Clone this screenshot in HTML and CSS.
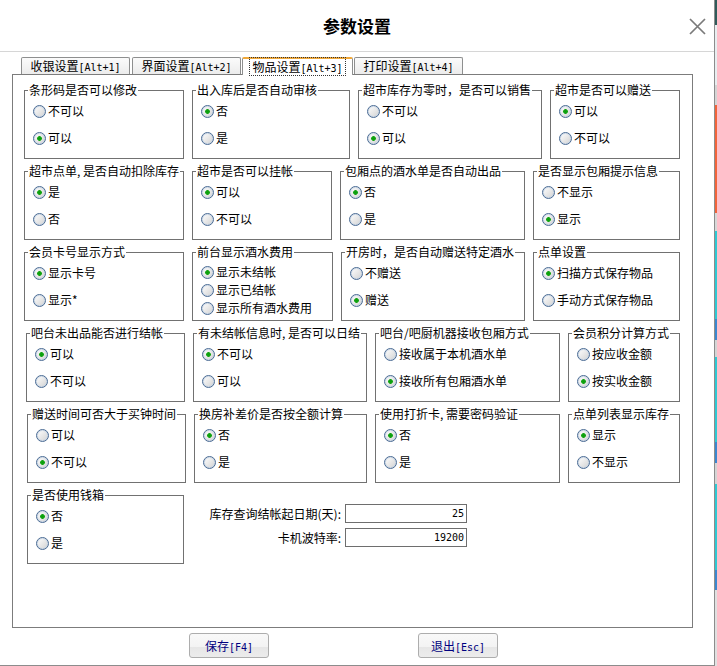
FILE: index.html
```html
<!DOCTYPE html>
<html lang="zh-CN">
<head>
<meta charset="utf-8">
<title>参数设置</title>
<link rel="stylesheet" href="styles.css">
</head>
<body>
<div class="screen">
  <div class="dialog">
    <header class="titlebar">
      <span></span>
      <h1 class="title">参数设置</h1>
      <button class="close" type="button" aria-label="关闭">
        <svg width="17" height="17" viewBox="0 0 17 17"><path d="M1 1L16 16M16 1L1 16" stroke="#7a7a7a" stroke-width="1.7" fill="none"/></svg>
      </button>
    </header>
    <main class="content">
      <nav class="tabs">
        <div class="tab">收银设置<span class="key">[Alt+1]</span></div>
        <div class="tab">界面设置<span class="key">[Alt+2]</span></div>
        <div class="tab active"><span class="lbl">物品设置<span class="key">[Alt+3]</span></span></div>
        <div class="tab">打印设置<span class="key">[Alt+4]</span></div>
      </nav>
      <section class="panel">
        <div class="row r1">
          <fieldset class="grp"><legend>条形码是否可以修改</legend><div class="opts">
            <label class="opt"><input class="rb" type="radio" name="g11"><span>不可以</span></label>
            <label class="opt"><input class="rb" type="radio" name="g11" checked><span>可以</span></label>
          </div></fieldset>
          <fieldset class="grp"><legend>出入库后是否自动审核</legend><div class="opts">
            <label class="opt"><input class="rb" type="radio" name="g12" checked><span>否</span></label>
            <label class="opt"><input class="rb" type="radio" name="g12"><span>是</span></label>
          </div></fieldset>
          <fieldset class="grp"><legend>超市库存为零时，是否可以销售</legend><div class="opts">
            <label class="opt"><input class="rb" type="radio" name="g13"><span>不可以</span></label>
            <label class="opt"><input class="rb" type="radio" name="g13" checked><span>可以</span></label>
          </div></fieldset>
          <fieldset class="grp"><legend>超市是否可以赠送</legend><div class="opts">
            <label class="opt"><input class="rb" type="radio" name="g14" checked><span>可以</span></label>
            <label class="opt"><input class="rb" type="radio" name="g14"><span>不可以</span></label>
          </div></fieldset>
        </div>
        <div class="row r2">
          <fieldset class="grp"><legend>超市点单, 是否自动扣除库存</legend><div class="opts">
            <label class="opt"><input class="rb" type="radio" name="g21" checked><span>是</span></label>
            <label class="opt"><input class="rb" type="radio" name="g21"><span>否</span></label>
          </div></fieldset>
          <fieldset class="grp"><legend>超市是否可以挂帐</legend><div class="opts">
            <label class="opt"><input class="rb" type="radio" name="g22" checked><span>可以</span></label>
            <label class="opt"><input class="rb" type="radio" name="g22"><span>不可以</span></label>
          </div></fieldset>
          <fieldset class="grp"><legend>包厢点的酒水单是否自动出品</legend><div class="opts">
            <label class="opt"><input class="rb" type="radio" name="g23" checked><span>否</span></label>
            <label class="opt"><input class="rb" type="radio" name="g23"><span>是</span></label>
          </div></fieldset>
          <fieldset class="grp"><legend>是否显示包厢提示信息</legend><div class="opts">
            <label class="opt"><input class="rb" type="radio" name="g24"><span>不显示</span></label>
            <label class="opt"><input class="rb" type="radio" name="g24" checked><span>显示</span></label>
          </div></fieldset>
        </div>
        <div class="row r3">
          <fieldset class="grp"><legend>会员卡号显示方式</legend><div class="opts">
            <label class="opt"><input class="rb" type="radio" name="g31" checked><span>显示卡号</span></label>
            <label class="opt"><input class="rb" type="radio" name="g31"><span>显示*</span></label>
          </div></fieldset>
          <fieldset class="grp"><legend>前台显示酒水费用</legend><div class="opts three">
            <label class="opt"><input class="rb" type="radio" name="g32" checked><span>显示未结帐</span></label>
            <label class="opt"><input class="rb" type="radio" name="g32"><span>显示已结帐</span></label>
            <label class="opt"><input class="rb" type="radio" name="g32"><span>显示所有酒水费用</span></label>
          </div></fieldset>
          <fieldset class="grp"><legend>开房时，是否自动赠送特定酒水</legend><div class="opts">
            <label class="opt"><input class="rb" type="radio" name="g33"><span>不赠送</span></label>
            <label class="opt"><input class="rb" type="radio" name="g33" checked><span>赠送</span></label>
          </div></fieldset>
          <fieldset class="grp"><legend>点单设置</legend><div class="opts">
            <label class="opt"><input class="rb" type="radio" name="g34" checked><span>扫描方式保存物品</span></label>
            <label class="opt"><input class="rb" type="radio" name="g34"><span>手动方式保存物品</span></label>
          </div></fieldset>
        </div>
        <div class="row r4">
          <fieldset class="grp"><legend>吧台未出品能否进行结帐</legend><div class="opts">
            <label class="opt"><input class="rb" type="radio" name="g41" checked><span>可以</span></label>
            <label class="opt"><input class="rb" type="radio" name="g41"><span>不可以</span></label>
          </div></fieldset>
          <fieldset class="grp"><legend>有未结帐信息时, 是否可以日结</legend><div class="opts">
            <label class="opt"><input class="rb" type="radio" name="g42" checked><span>不可以</span></label>
            <label class="opt"><input class="rb" type="radio" name="g42"><span>可以</span></label>
          </div></fieldset>
          <fieldset class="grp"><legend>吧台/吧厨机器接收包厢方式</legend><div class="opts">
            <label class="opt"><input class="rb" type="radio" name="g43"><span>接收属于本机酒水单</span></label>
            <label class="opt"><input class="rb" type="radio" name="g43" checked><span>接收所有包厢酒水单</span></label>
          </div></fieldset>
          <fieldset class="grp"><legend>会员积分计算方式</legend><div class="opts">
            <label class="opt"><input class="rb" type="radio" name="g44"><span>按应收金额</span></label>
            <label class="opt"><input class="rb" type="radio" name="g44" checked><span>按实收金额</span></label>
          </div></fieldset>
        </div>
        <div class="row r5">
          <fieldset class="grp"><legend>赠送时间可否大于买钟时间</legend><div class="opts">
            <label class="opt"><input class="rb" type="radio" name="g51"><span>可以</span></label>
            <label class="opt"><input class="rb" type="radio" name="g51" checked><span>不可以</span></label>
          </div></fieldset>
          <fieldset class="grp"><legend>换房补差价是否按全额计算</legend><div class="opts">
            <label class="opt"><input class="rb" type="radio" name="g52" checked><span>否</span></label>
            <label class="opt"><input class="rb" type="radio" name="g52"><span>是</span></label>
          </div></fieldset>
          <fieldset class="grp"><legend>使用打折卡, 需要密码验证</legend><div class="opts">
            <label class="opt"><input class="rb" type="radio" name="g53" checked><span>否</span></label>
            <label class="opt"><input class="rb" type="radio" name="g53"><span>是</span></label>
          </div></fieldset>
          <fieldset class="grp"><legend>点单列表显示库存</legend><div class="opts">
            <label class="opt"><input class="rb" type="radio" name="g54" checked><span>显示</span></label>
            <label class="opt"><input class="rb" type="radio" name="g54"><span>不显示</span></label>
          </div></fieldset>
        </div>
        <div class="row r6">
          <fieldset class="grp cash"><legend>是否使用钱箱</legend><div class="opts">
            <label class="opt"><input class="rb" type="radio" name="g61" checked><span>否</span></label>
            <label class="opt"><input class="rb" type="radio" name="g61"><span>是</span></label>
          </div></fieldset>
          <div class="extra">
            <label class="flabel" for="days">库存查询结帐起日期(天):</label>
            <input class="num" id="days" type="text" value="25">
            <label class="flabel" for="baud">卡机波特率:</label>
            <input class="num" id="baud" type="text" value="19200">
          </div>
        </div>
      </section>
      <div class="buttons">
        <button class="btn" type="button">保存<span class="key">[F4]</span></button>
        <button class="btn" type="button">退出<span class="key">[Esc]</span></button>
      </div>
    </main>
  </div>
  <div class="backdrop"></div>
</div>
</body>
</html>
```
FILE: styles.css
```css
* { box-sizing: border-box; }
html, body { margin: 0; padding: 0; }
body {
  width: 717px;
  height: 666px;
  overflow: hidden;
  background: #fff;
  color: #000;
  font-family: "Noto Sans CJK SC", "Noto Sans", sans-serif;
  font-size: 12px;
}
.screen { display: flex; height: 666px; }
.dialog {
  width: 715px;
  height: 666px;
  flex: none;
  background: #fff;
  border-right: 1px solid #8c8c8c;
  border-bottom: 1px solid #8c8c8c;
  display: flex;
  flex-direction: column;
}
.backdrop {
  flex: 1;
  background: linear-gradient(to bottom,
    #2f5b5a 0 25px, #e8eef0 25px 85px, #d5d5d5 85px 105px,
    #f2643a 105px 213px, #d8d8d8 213px 231px,
    #2ec9d3 231px 319px, #3b87cf 319px 340px, #d5d5d5 340px 357px,
    #2ec9d3 357px 442px, #3b87cf 442px 463px, #d5d5d5 463px 484px,
    #2ec9d3 484px 570px, #3b87cf 570px 590px, #e0e0e0 590px);
}
.titlebar {
  height: 52px;
  flex: none;
  border-bottom: 1px solid #d6d6d6;
  display: grid;
  grid-template-columns: 1fr auto 1fr;
  align-items: center;
}
.title {
  margin: 0;
  font-size: 17px;
  font-weight: bold;
  line-height: 20px;
}
.close {
  justify-self: end;
  margin: 2px 8px 0 0;
  padding: 0;
  border: 0;
  background: none;
  width: 17px;
  height: 17px;
  display: block;
}
.close svg { display: block; }
.content { padding: 5px 0 0 12px; }
.tabs {
  display: flex;
  gap: 2px;
  margin-left: 9px;
  height: 17px;
}
.tab {
  width: 109px;
  height: 17px;
  border: 1px solid #8e8f8f;
  border-bottom: none;
  border-radius: 2px 2px 0 0;
  background: linear-gradient(#fbfbfb, #ececec);
  text-align: center;
  line-height: 15px;
  white-space: nowrap;
}
.tab.active {
  position: relative;
  z-index: 2;
  width: 111px;
  height: 18px;
  margin: 0 -1px;
  background: #fff;
  border-top: 2px solid #f0a83a;
}
.tab.active .lbl {
  outline: 1px dotted #333;
  padding: 0 2px;
}
.key {
  font-family: "DejaVu Sans Mono", "Liberation Mono", monospace;
  font-size: 10px;
}
.panel {
  width: 681px;
  height: 554px;
  border: 1px solid #7c7c7c;
  padding: 8px 0 0 11px;
  display: flex;
  flex-direction: column;
  gap: 5px;
}
.row {
  display: grid;
  column-gap: 8px;
  height: 76px;
}
.r1 { grid-template-columns: 160px 158px 184px 130px; }
.r2 { grid-template-columns: 160px 140px 185px 147px; }
.r3 { grid-template-columns: 160px 141px 184px 147px; }
.r4 { grid-template-columns: 159px 174px 185px 112px; margin-left: 2px; }
.r5 { grid-template-columns: 159px 173px 185px 112px; margin-left: 3px; }
.r6 { display: flex; column-gap: 0; margin-left: 3px; }
.grp {
  margin: 0;
  padding: 0;
  min-width: 0;
  height: 76px;
  border: 1px solid #717171;
}
.grp.cash { width: 157px; flex: none; }
.grp legend {
  margin-left: 3px;
  padding: 0 1px;
  line-height: 14px;
  white-space: nowrap;
}
.opts {
  display: flex;
  flex-direction: column;
  gap: 13px;
  padding: 7px 0 0 8px;
}
.opts.three { gap: 4px; padding-top: 6px; }
.opt {
  display: flex;
  align-items: center;
  gap: 2px;
  height: 14px;
  line-height: 14px;
  white-space: nowrap;
}
.rb {
  -webkit-appearance: none;
  appearance: none;
  flex: none;
  width: 13px;
  height: 13px;
  margin: 0;
  border: 1px solid #4a6b94;
  border-radius: 50%;
  background: linear-gradient(135deg, #ffffff 0%, #e4e4e4 60%, #d2d2d2 100%);
  box-shadow: inset 0 0 0 1px rgba(200, 214, 230, 0.8);
}
.rb:checked {
  background:
    radial-gradient(circle, #0c9a0c 0, #13a613 2px, rgba(255,255,255,0) 2.7px),
    linear-gradient(135deg, #ffffff 0%, #e4e4e4 60%, #d2d2d2 100%);
}
.extra {
  display: grid;
  grid-template-columns: 142px 122px;
  column-gap: 4px;
  row-gap: 5px;
  align-content: start;
  margin-left: 15px;
  padding-top: 16px;
}
.flabel {
  text-align: right;
  line-height: 19px;
  white-space: nowrap;
}
.num {
  width: 122px;
  height: 19px;
  margin: 0;
  border: 1px solid #6e6e6e;
  padding: 0 2px 0 1px;
  text-align: right;
  font-family: "DejaVu Sans Mono", "Liberation Mono", monospace;
  font-size: 10px;
  color: #000;
  background: #fff;
}
.buttons {
  display: flex;
  gap: 149px;
  margin: 5px 0 0 177px;
}
.btn {
  width: 80px;
  height: 25px;
  padding: 0;
  border: 1px solid #adadad;
  border-radius: 3px;
  background: linear-gradient(#f9f9f9 0%, #f3f3f3 55%, #e6e6e6 56%, #ececec 100%);
  color: #000080;
  font-family: "Noto Sans CJK SC", "Noto Sans", sans-serif;
  font-size: 12px;
}
```
